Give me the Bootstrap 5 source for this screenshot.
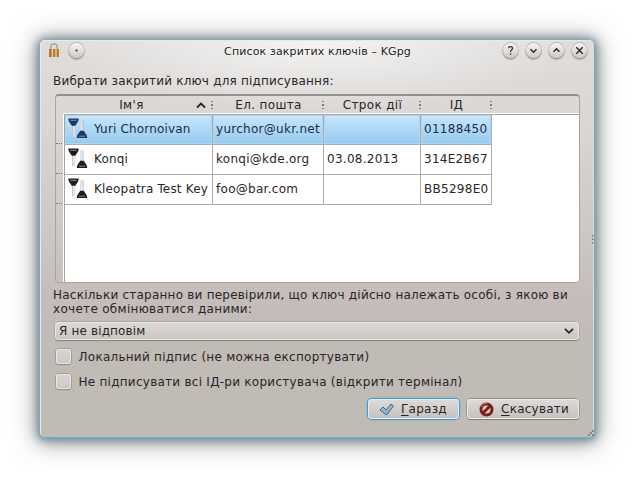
<!DOCTYPE html>
<html lang="uk">
<head>
<meta charset="utf-8">
<title>Список закритих ключів – KGpg</title>
<link href="https://cdn.jsdelivr.net/npm/bootstrap@5.3.0/dist/css/bootstrap.min.css" rel="stylesheet">
<style>
body{background:#fff;font:12px/14px "DejaVu Sans",sans-serif;color:#2a2527;overflow:hidden;height:477px;padding:40px}
.win{width:554px;height:397px;border-radius:5px;padding:0 14px 0 13px;position:relative;
 background:radial-gradient(ellipse 270px 70px at 50% 0,#f4f4f3 0,rgba(240,240,239,0) 100%),linear-gradient(#dfdcda 0,#d9d6d3 90px,#cbc6c1 205px,#c5bdba 255px,#c1bbb6 300px);
 box-shadow:inset 1px 1px 0 #eceae8,inset -1px 0 0 #dedad8,0 1px 3px 1px #74aac4,0 1px 10px 3px rgba(62,88,108,.55),0 2px 24px 4px rgba(70,70,70,.5)}
.titlebar{height:21px;margin-left:-4px}
.title-text{font-size:11px;letter-spacing:.13px;color:#1c1a1b;white-space:nowrap;text-shadow:0 0 2px #fff;padding:2px 0 0 48px}
.rnd{width:15px;height:15px;border-radius:50%;background:linear-gradient(#f6f5f4,#cdc9c7);box-shadow:0 0 0 .7px #aaa5a3,0 1.5px 1.5px #8d8886}
.menu-dot{margin-left:10px}
.winbtns{gap:8px;margin-right:-7px}
.t{white-space:nowrap}
.lbl{margin-top:13px;letter-spacing:.2px}
.frame{margin:6px 0 0 2px;width:525px;height:189px;border:1px solid #aaa5a2;border-top:2px solid #94908d;border-radius:4px;overflow:hidden}
.gutter{width:8px}
.gutter i{display:block;height:30px;border-bottom:1px dotted #777}
.gutter i:first-child{margin-top:18px}
.sheet{background:#fff;border-left:1px solid #aca29e;flex:1;margin-top:18px;box-shadow:-1px 0 0 #fff,0 -1px 0 #fff;border-top:1px solid #aca29e;height:169px}
.keys{border-collapse:separate;border-spacing:0;table-layout:fixed;width:427px;letter-spacing:.28px}
.keys td{height:30px;padding:0 0 2px 3px;border-right:1px solid #b5aaa6;border-bottom:1px solid #b5aaa6;white-space:nowrap;vertical-align:middle}
.keys td:first-child{letter-spacing:.17px}
.keys tr.sel td{background:linear-gradient(#c9e7fc,#93caf1);box-shadow:inset 0 0 0 1px #a9d7f6;color:#232c44}
.keyicon{width:20px;height:21px;margin-right:6px;color:#1d1c1f}
.sel .keyicon{color:#1d3864}
.heads{position:absolute;left:25px;top:57px;width:427px;height:16px;letter-spacing:.35px}
.heads div{position:relative;text-align:center;height:16px;line-height:16px}
.dots{position:absolute;right:0;top:4px;width:2px;height:9px;background:repeating-linear-gradient(#817c7a 0 1.5px,transparent 1.5px 3.3px)}
.ques{margin-top:5px;letter-spacing:.23px}
.ques span+br+span{letter-spacing:.3px}
.combo{margin:6px 0 0 2px;width:524px;height:18px;border-radius:4px;padding:0 5px 1px 4px;letter-spacing:.15px;background:linear-gradient(#dedbd9,#c9c4c1);box-shadow:inset 0 0 0 1px #e9e6e4,0 0 0 .5px #999390,0 1px 1px #77716f}
.checks{padding-top:4px;letter-spacing:.26px}
.checkline{height:25px}
.boxy{width:15px;height:15px;border-radius:3px;background:linear-gradient(#d8d5d3,#cbc7c4);box-shadow:inset 0 0 0 1px #e9e6e4,0 0 0 .7px #9b9592,0 1px 1px #77716f;margin:0 7.5px 0 3px}
.foot{gap:8px;padding:5px 1px 0 0;letter-spacing:.25px}
.push{height:20px;width:112px;padding-left:12px;border-radius:4px;background:linear-gradient(#dedbd9,#c5c0bd);box-shadow:inset 0 0 0 1px #ebe8e6,0 0 0 .7px #8d8785,0 1px 1px #6f6967}
.push.ok{width:91px;padding-left:11px;box-shadow:inset 0 0 0 1px #eceae9,0 0 0 1px #3d9bd6,0 0 2px 1px #61b3e4}
.push span{margin-left:7px;white-space:nowrap}
.push u{text-underline-offset:2px}
.grip{position:absolute;right:0;bottom:1px}
.side{position:absolute;right:-1px;top:195px}
</style>
<script src="https://cdn.jsdelivr.net/npm/bootstrap@5.3.0/dist/js/bootstrap.bundle.min.js"></script>
</head>
<body>
<svg width="0" height="0" class="position-absolute">
 <defs><linearGradient id="kg" x2="1"><stop stop-color="#aaa"/><stop offset=".5" stop-color="#eee"/><stop offset="1" stop-color="#ccc"/></linearGradient>
 <g id="one"><path d="M4 7h3.300v10.500l-1.300 1.500-2-1z" fill="url(#kg)" opacity=".85"/><path d="M.8.5h9.400q.6 0 .5 1C10.400 4 8.300 5.500 7.300 7.800H3.700C2.700 5.500.6 4 .3 1.500q-.1-1 .5-1z" fill="currentColor"/><path d="M2.300 2.300h6.400" stroke="#a3aeb7" stroke-width="1" opacity=".75"/></g>
 <g id="keypair"><use href="#one"/><use href="#one" transform="translate(19.500 20.500) rotate(180)"/></g></defs>
</svg>
<main class="win">
 <header class="titlebar d-flex align-items-center">
  <svg width="10" height="15" viewBox="0 0 10 15"><path d="M1.800 7V4a3.200 3.200 0 0 1 6.400 0v3" fill="none" stroke="#aaa5a0" stroke-width="1.500"/><path d="M0 6h10v8H0z" fill="#c58c45"/><path d="M1 6v8M5 6v8M9 6v8" stroke="#a56c2c"/><path d="M3.500 6v8M7 6v8" stroke="#f1d8a8"/></svg>
  <svg class="rnd menu-dot" viewBox="0 0 15 15"><circle cx="7.500" cy="7.500" r="1" fill="#222"/></svg>
  <span class="title-text flex-fill text-center">Список закритих ключів – KGpg</span>
  <span class="d-flex winbtns">
   <svg class="rnd" viewBox="0 0 15 15"><path d="M5.400 5.200C5.600 3 9.600 3 9.500 5.400 9.400 6.900 7.500 7 7.500 9M7.500 10.300v1.500" fill="none" stroke="#302b2d" stroke-width="1.300"/></svg>
   <svg class="rnd" viewBox="0 0 15 15"><path d="M4.500 6.200l3 3 3-3" fill="none" stroke="#302b2d" stroke-width="1.500"/></svg>
   <svg class="rnd" viewBox="0 0 15 15"><path d="M4.500 8.800l3-3 3 3" fill="none" stroke="#302b2d" stroke-width="1.500"/></svg>
   <svg class="rnd" viewBox="0 0 15 15"><path d="M4.300 4.300l6.400 6.400M10.700 4.300l-6.400 6.400" fill="none" stroke="#302b2d" stroke-width="1.500"/></svg>
  </span>
 </header>
 <div class="lbl t">Вибрати закритий ключ для підписування:</div>
 <section class="frame d-flex">
  <div class="gutter"><i></i><i></i><i></i></div>
  <div class="sheet">
   <table class="keys">
    <colgroup><col style="width:148px"><col style="width:111px"><col style="width:97px"><col style="width:71px"></colgroup>
    <tr class="sel"><td><div class="d-flex align-items-center"><svg class="keyicon"><use href="#keypair"/></svg>Yuri Chornoivan</div></td><td>yurchor@ukr.net</td><td></td><td>01188450</td></tr>
    <tr><td><div class="d-flex align-items-center"><svg class="keyicon"><use href="#keypair"/></svg>Konqi</div></td><td>konqi@kde.org</td><td>03.08.2013</td><td>314E2B67</td></tr>
    <tr><td><div class="d-flex align-items-center"><svg class="keyicon"><use href="#keypair"/></svg>Kleopatra Test Key</div></td><td>foo@bar.com</td><td></td><td>BB5298E0</td></tr>
   </table>
  </div>
 </section>
 <div class="heads d-flex">
  <div style="width:148px;padding-right:15px">Ім'я<svg class="position-absolute" style="right:7px;top:4px" width="10" height="8"><path d="M1 6.500l4-4 4 4" fill="none" stroke="#2a2527" stroke-width="1.800"/></svg><i class="dots"></i></div>
  <div style="width:111px">Ел. пошта<i class="dots"></i></div><div style="width:97px">Строк дії<i class="dots"></i></div><div style="width:71px">ІД<i class="dots"></i></div>
 </div>
 <div class="ques t"><span>Наскільки старанно ви перевірили, що ключ дійсно належать особі, з якою ви</span><br><span>хочете обмінюватися даними:</span></div>
 <div class="combo d-flex align-items-center justify-content-between"><span>Я не відповім</span><svg width="10" height="8"><path d="M1 1.800l4 4 4-4" fill="none" stroke="#2a2527" stroke-width="1.800"/></svg></div>
 <div class="checks">
  <div class="checkline d-flex align-items-center"><i class="boxy"></i><span>Локальний підпис (не можна експортувати)</span></div>
  <div class="checkline d-flex align-items-center"><i class="boxy"></i><span>Не підписувати всі ІД-ри користувача (відкрити термінал)</span></div>
 </div>
 <footer class="foot d-flex justify-content-end">
  <div class="push ok d-flex align-items-center"><svg width="15" height="13"><path d="M1 7l3-3 3 3 5-6 2.500 2-7 9z" fill="#90b5d0" stroke="#41698a"/></svg><span><u>Г</u>аразд</span></div>
  <div class="push d-flex align-items-center"><svg width="15" height="15"><circle cx="7.500" cy="7.500" r="5.500" fill="#d8cfca" stroke="#7c2015" stroke-width="3"/><path d="M3.500 11.500l8-8" stroke="#7c2015" stroke-width="3"/><path d="M2 5Q4 1 8 1.200" stroke="#bf7a4c" fill="none"/></svg><span><u>С</u>касувати</span></div>
 </footer>
 <svg class="grip" width="6" height="6"><path d="M4 0h2v2H4zM2 2h2v2H2zM0 4h2v2H0zM4 4h2v2H4z" fill="#8a8482"/></svg>
 <svg class="side" width="3" height="9"><path d="M0 0h1.500v1.500H0zM0 3.500h1.500V5H0zM0 7h1.500v1.500H0z" fill="#777"/></svg>
</main>
</body>
</html>
